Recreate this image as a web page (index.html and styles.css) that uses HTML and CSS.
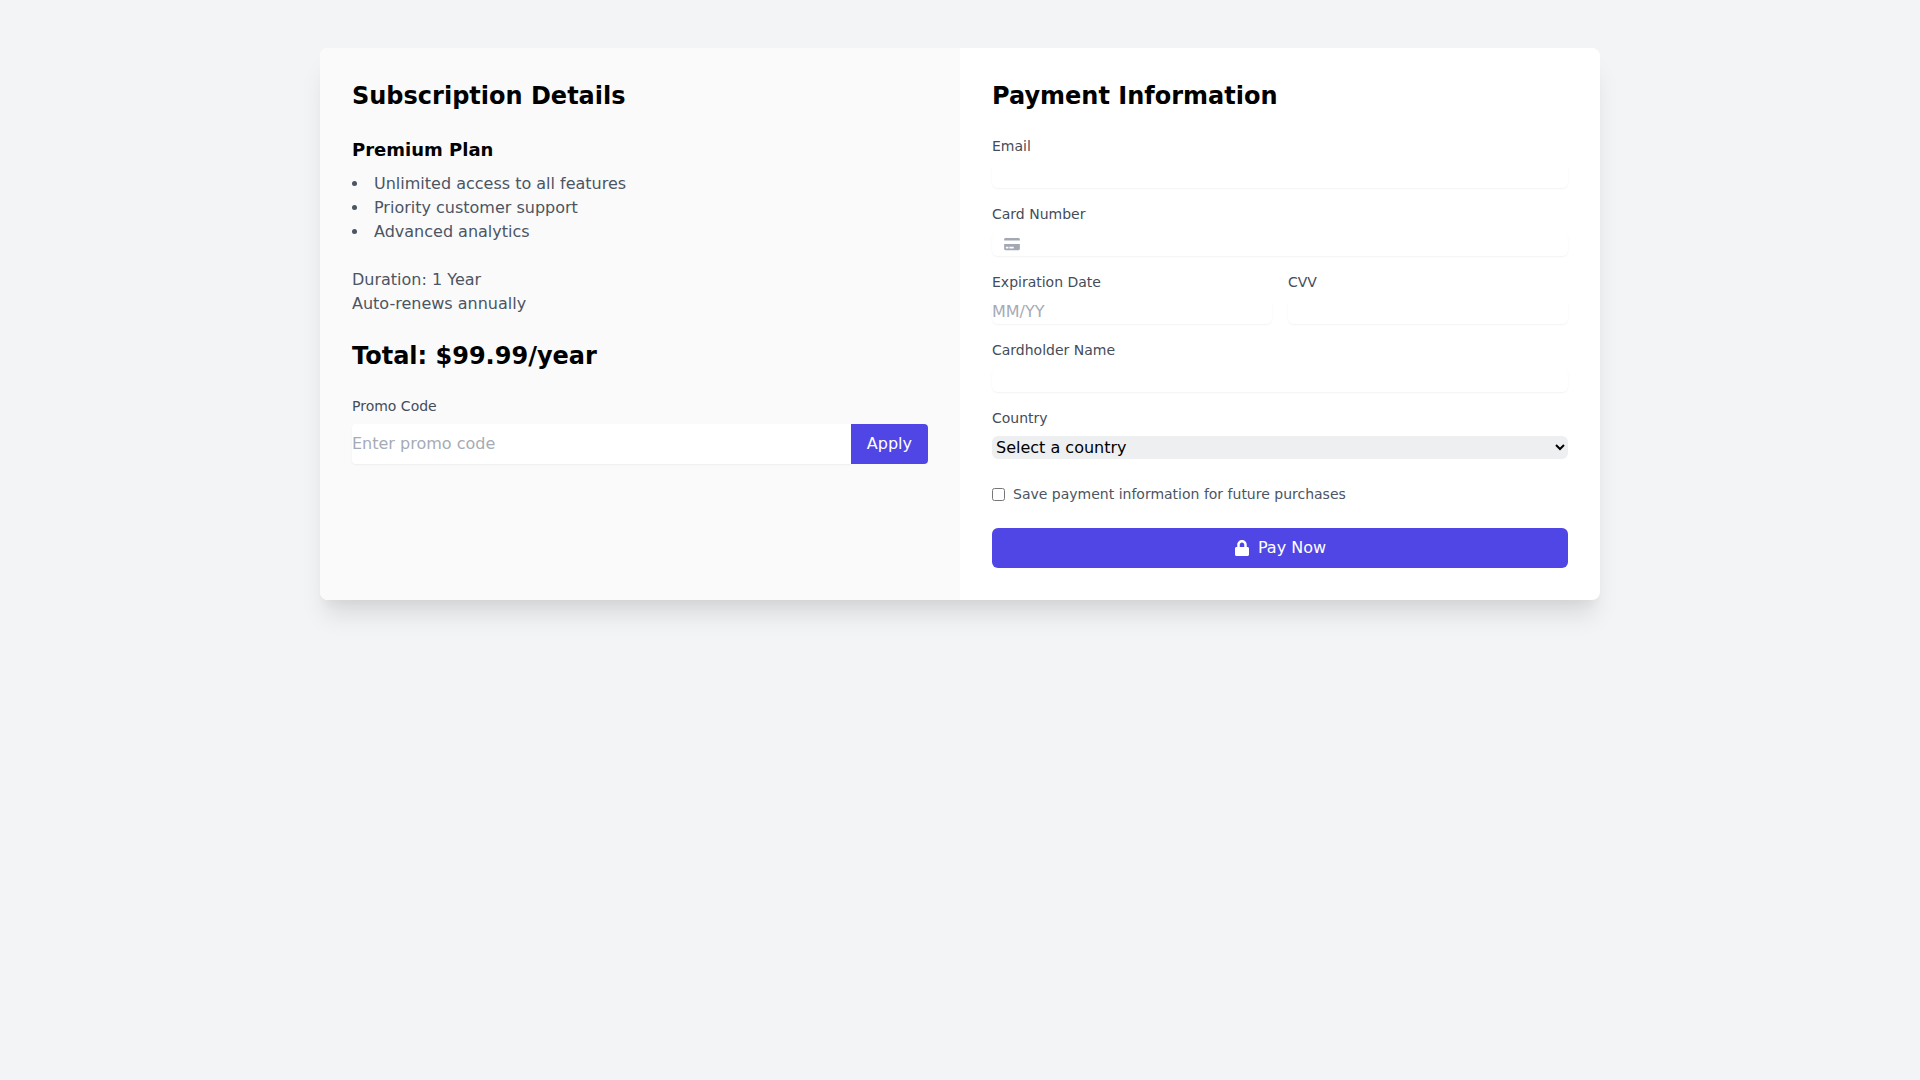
FILE: index.html
```html
<!DOCTYPE html>
<html lang="en">
<head>
    <meta charset="UTF-8">
    <meta name="viewport" content="width=device-width, initial-scale=1.0">
    <title>Subscription Checkout</title>
    <link rel="stylesheet" href="styles.css">
</head>
<body>
    <div class="card">
        <!-- Subscription summary -->
        <div class="summary">
            <h2>Subscription Details</h2>
            <h3>Premium Plan</h3>
            <ul class="features">
                <li>Unlimited access to all features</li>
                <li>Priority customer support</li>
                <li>Advanced analytics</li>
            </ul>
            <p class="terms">Duration: 1 Year</p>
            <p class="terms-last">Auto-renews annually</p>
            <div class="total">Total: $99.99/year</div>
            <label class="field-label" for="promo">Promo Code</label>
            <div class="promo-row">
                <input type="text" id="promo" class="promo-input" placeholder="Enter promo code">
                <button class="apply-btn" type="button">Apply</button>
            </div>
        </div>

        <!-- Payment form -->
        <form class="payment">
            <h2>Payment Information</h2>
            <div class="input-group">
                <label class="field-label" for="email">Email</label>
                <input type="email" id="email" class="text-input">
            </div>
            <div class="input-group">
                <label class="field-label" for="cardNumber">Card Number</label>
                <div class="card-wrap">
                    <input type="text" id="cardNumber" class="text-input">
                    <svg class="card-icon" viewBox="0 0 576 512" aria-hidden="true">
                        <path d="M0 432c0 26.5 21.5 48 48 48h480c26.5 0 48-21.5 48-48V256H0v176zm192-68c0-6.6 5.4-12 12-12h136c6.6 0 12 5.4 12 12v40c0 6.6-5.4 12-12 12H204c-6.6 0-12-5.4-12-12v-40zm-128 0c0-6.6 5.4-12 12-12h72c6.6 0 12 5.4 12 12v40c0 6.6-5.4 12-12 12H76c-6.6 0-12-5.4-12-12v-40zM576 80v48H0V80c0-26.5 21.5-48 48-48h480c26.5 0 48 21.5 48 48z"/>
                    </svg>
                </div>
            </div>
            <div class="two-col">
                <div>
                    <label class="field-label" for="expiry">Expiration Date</label>
                    <input type="text" id="expiry" class="text-input" placeholder="MM/YY">
                </div>
                <div>
                    <label class="field-label" for="cvv">CVV</label>
                    <input type="text" id="cvv" class="text-input">
                </div>
            </div>
            <div class="input-group">
                <label class="field-label" for="holder">Cardholder Name</label>
                <input type="text" id="holder" class="text-input">
            </div>
            <div class="input-group">
                <label class="field-label" for="country">Country</label>
                <div class="select-wrap">
                    <select id="country" class="country-select">
                        <option>Select a country</option>
                        <option>United States</option>
                        <option>Canada</option>
                    </select>
                </div>
            </div>
            <label class="save-row">
                <input type="checkbox" class="save-check">
                <span>Save payment information for future purchases</span>
            </label>
            <button class="pay-btn" type="button">
                <svg class="lock-icon" viewBox="0 0 448 512" aria-hidden="true">
                    <path d="M400 224h-24v-72C376 68.2 307.8 0 224 0S72 68.2 72 152v72H48c-26.5 0-48 21.5-48 48v192c0 26.5 21.5 48 48 48h352c26.5 0 48-21.5 48-48V272c0-26.5-21.5-48-48-48zm-104 0H152v-72c0-39.7 32.3-72 72-72s72 32.3 72 72v72z"/>
                </svg>
                Pay Now
            </button>
        </form>
    </div>
</body>
</html>
```

FILE: styles.css
```css
* {
    box-sizing: border-box;
}
body {
    margin: 0;
    min-height: 100vh;
    padding-top: 48px;
    background-color: #f3f4f6;
    font-family: "DejaVu Sans", sans-serif;
    font-size: 16px;
    line-height: 24px;
    color: #000;
}
.card {
    display: grid;
    grid-template-columns: 1fr 1fr;
    width: 1280px;
    margin: 0 auto;
    background: #fff;
    border-radius: 8px;
    box-shadow: 0 20px 25px -5px rgba(0, 0, 0, 0.1), 0 10px 10px -5px rgba(0, 0, 0, 0.04);
}
.summary {
    padding: 32px;
    background-color: #fafafa;
    border-radius: 8px 0 0 8px;
}
.payment {
    padding: 32px;
}
h2 {
    margin: 0 0 24px;
    font-size: 24px;
    line-height: 32px;
    font-weight: 700;
}
h3 {
    margin: 0 0 8px;
    font-size: 18px;
    line-height: 28px;
    font-weight: 700;
}
.features {
    margin: 0 0 24px;
    padding: 0;
    list-style: disc inside;
    color: #4b5563;
}
.terms, .terms-last {
    margin: 0;
    color: #4b5563;
}
.terms-last {
    margin-bottom: 24px;
}
.total {
    margin-bottom: 24px;
    font-size: 24px;
    line-height: 32px;
    font-weight: 700;
}
.field-label {
    display: block;
    margin-bottom: 8px;
    font-size: 14px;
    line-height: 20px;
    color: #444c5a;
}
.promo-row {
    display: flex;
}
.promo-input {
    flex: 1;
    min-width: 0;
    height: 40px;
    padding: 0 0 2px;
    border: 0;
    border-radius: 4px 0 0 4px;
    background: #fff;
    box-shadow: 0 1px 2px rgba(0, 0, 0, 0.05);
    font: inherit;
    outline: none;
}
.apply-btn {
    height: 40px;
    padding: 0 16px;
    border: 0;
    border-radius: 0 4px 4px 0;
    background-color: #4f46e5;
    color: #fff;
    font: inherit;
}
.input-group {
    margin-bottom: 16px;
}
.text-input {
    display: block;
    width: 100%;
    height: 24px;
    padding: 0;
    border: 0;
    border-radius: 6px;
    background: #fff;
    box-shadow: 0 1px 2px rgba(0, 0, 0, 0.05);
    font: inherit;
    outline: none;
}
::placeholder {
    color: #a5abb6;
    opacity: 1;
}
.card-wrap {
    position: relative;
}
.card-icon {
    position: absolute;
    left: 12px;
    top: 5px;
    width: 16px;
    height: 14px;
    fill: #a3a8b3;
}
.two-col {
    display: grid;
    grid-template-columns: 1fr 1fr;
    gap: 16px;
    margin-bottom: 16px;
}
.select-wrap {
    padding-bottom: 1px;
}
.country-select {
    display: block;
    width: 100%;
    height: 23px;
    border: 0;
    border-radius: 6px;
    background-color: #eeeff1;
    color: #000;
    font: inherit;
    line-height: normal;
}
.save-row {
    display: flex;
    align-items: center;
    margin-top: 24px;
    font-size: 14px;
    line-height: 20px;
    color: #4b5563;
}
.save-check {
    width: 13px;
    height: 13px;
    margin: 0 8px 0 0;
}
.pay-btn {
    display: flex;
    align-items: center;
    justify-content: center;
    width: 100%;
    height: 40px;
    margin-top: 24px;
    padding: 0 0 0 1px;
    border: 0;
    border-radius: 6px;
    background-color: #4f46e5;
    color: #fff;
    font: inherit;
}
.lock-icon {
    width: 14px;
    height: 16px;
    margin-right: 9px;
    fill: #fff;
}
```
